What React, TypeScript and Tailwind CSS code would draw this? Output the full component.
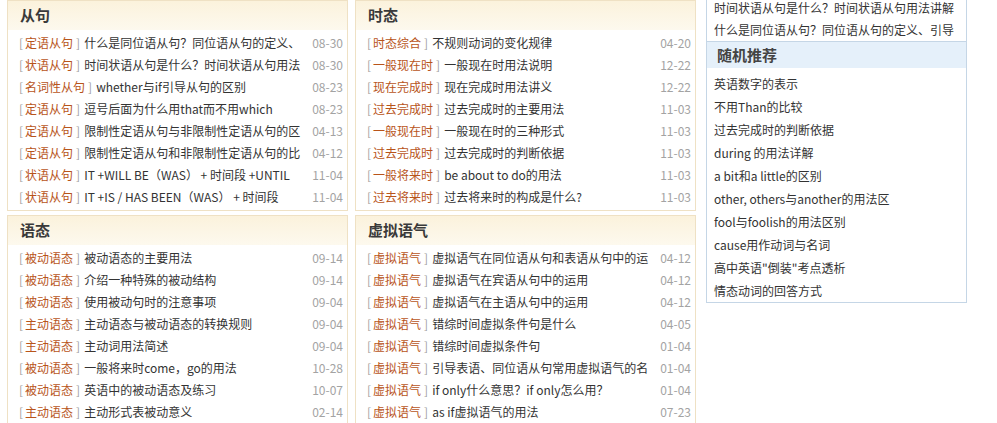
import React from 'react';

type Row = { tag: string; title: string; date: string };

const FONT = { fontFamily: '"Microsoft YaHei", "Noto Sans CJK SC", "Noto Sans", sans-serif' };

const CLAUSES: Row[] = [
  { tag: '定语从句', title: '什么是同位语从句？同位语从句的定义、', date: '08-30' },
  { tag: '状语从句', title: '时间状语从句是什么？时间状语从句用法', date: '08-30' },
  { tag: '名词性从句', title: 'whether与if引导从句的区别', date: '08-23' },
  { tag: '定语从句', title: '逗号后面为什么用that而不用which', date: '08-23' },
  { tag: '定语从句', title: '限制性定语从句与非限制性定语从句的区', date: '04-13' },
  { tag: '定语从句', title: '限制性定语从句和非限制性定语从句的比', date: '04-12' },
  { tag: '状语从句', title: 'IT +WILL BE（WAS） + 时间段 +UNTIL', date: '11-04' },
  { tag: '状语从句', title: 'IT +IS / HAS BEEN（WAS） + 时间段', date: '11-04' },
];

const TENSES: Row[] = [
  { tag: '时态综合', title: '不规则动词的变化规律', date: '04-20' },
  { tag: '一般现在时', title: '一般现在时用法说明', date: '12-22' },
  { tag: '现在完成时', title: '现在完成时用法讲义', date: '12-22' },
  { tag: '过去完成时', title: '过去完成时的主要用法', date: '11-03' },
  { tag: '一般现在时', title: '一般现在时的三种形式', date: '11-03' },
  { tag: '过去完成时', title: '过去完成时的判断依据', date: '11-03' },
  { tag: '一般将来时', title: 'be about to do的用法', date: '11-03' },
  { tag: '过去将来时', title: '过去将来时的构成是什么?', date: '11-03' },
];

const VOICE: Row[] = [
  { tag: '被动语态', title: '被动语态的主要用法', date: '09-14' },
  { tag: '被动语态', title: '介绍一种特殊的被动结构', date: '09-14' },
  { tag: '被动语态', title: '使用被动句时的注意事项', date: '09-04' },
  { tag: '主动语态', title: '主动语态与被动语态的转换规则', date: '09-04' },
  { tag: '主动语态', title: '主动词用法简述', date: '09-04' },
  { tag: '被动语态', title: '一般将来时come，go的用法', date: '10-28' },
  { tag: '被动语态', title: '英语中的被动语态及练习', date: '10-07' },
  { tag: '主动语态', title: '主动形式表被动意义', date: '02-14' },
];

const SUBJUNCTIVE: Row[] = [
  { tag: '虚拟语气', title: '虚拟语气在同位语从句和表语从句中的运', date: '04-12' },
  { tag: '虚拟语气', title: '虚拟语气在宾语从句中的运用', date: '04-12' },
  { tag: '虚拟语气', title: '虚拟语气在主语从句中的运用', date: '04-12' },
  { tag: '虚拟语气', title: '错综时间虚拟条件句是什么', date: '04-05' },
  { tag: '虚拟语气', title: '错综时间虚拟条件句', date: '01-04' },
  { tag: '虚拟语气', title: '引导表语、同位语从句常用虚拟语气的名', date: '01-04' },
  { tag: '虚拟语气', title: 'if only什么意思？if only怎么用？', date: '01-04' },
  { tag: '虚拟语气', title: 'as if虚拟语气的用法', date: '07-23' },
];

const LATEST = ['时间状语从句是什么？时间状语从句用法讲解', '什么是同位语从句？同位语从句的定义、引导'];

const RANDOM = [
  '英语数字的表示',
  '不用Than的比较',
  '过去完成时的判断依据',
  'during 的用法详解',
  'a bit和a little的区别',
  'other, others与another的用法区',
  'fool与foolish的用法区别',
  'cause用作动词与名词',
  '高中英语"倒装"考点透析',
  '情态动词的回答方式',
];

function ArticleBox({ title, rows, className = '' }: { title: string; rows: Row[]; className?: string }) {
  return (
    <div className={`border border-[#efe1c4] bg-white ${className}`}>
      <div className="h-[29px] bg-gradient-to-b from-[#fbf2dc] to-[#fdf9ee] px-3 flex items-center">
        <h3 className="text-[15px] font-bold text-[#3a3a3a]">{title}</h3>
      </div>
      <ul className="pt-[2px] pb-[2px]">
        {rows.map((r, i) => (
          <li key={i} className="h-[22px] flex items-center pl-[11px] pr-[4px] text-[12px] whitespace-nowrap">
            <span className="flex-1 overflow-hidden flex items-center">
              <span className="text-[#a0a0a0]">[</span>
              <span className="text-[#b8541a] ml-[2px]">{r.tag}</span>
              <span className="text-[#a0a0a0] ml-[3px] mr-[4px]">]</span>
              <span className="text-[#333]">{r.title}</span>
            </span>
            <span className="ml-[8px] text-[#a3a3a3]">{r.date}</span>
          </li>
        ))}
      </ul>
    </div>
  );
}

export default function App() {
  return (
    <div className="w-[997px] h-[423px] overflow-hidden bg-white flex pl-[7px]" style={FONT}>
      <div className="w-[341px] flex flex-col">
        <ArticleBox title="从句" rows={CLAUSES} />
        <ArticleBox title="语态" rows={VOICE} className="mt-[4px]" />
      </div>
      <div className="w-[341px] ml-[7px] flex flex-col">
        <ArticleBox title="时态" rows={TENSES} />
        <ArticleBox title="虚拟语气" rows={SUBJUNCTIVE} className="mt-[4px]" />
      </div>
      <div className="w-[261px] ml-[10px] flex flex-col">
        {/* tail of the box above, scrolled partly out of view */}
        <ul className="border-x border-b border-[#c5d6e6] -mt-[3px] pl-[7px]">
          {LATEST.map((t) => (
            <li key={t} className="h-[22px] leading-[22px] text-[12px] text-[#333] whitespace-nowrap overflow-hidden">
              {t}
            </li>
          ))}
        </ul>
        <div className="border-x border-b border-[#c5d6e6]">
          <div className="h-[26px] bg-[#e5f0fa] pl-[10px] flex items-center">
            <h3 className="text-[15px] font-bold text-[#444]">随机推荐</h3>
          </div>
          <ul className="pt-[4px] pl-[7px]">
            {RANDOM.map((t) => (
              <li key={t} className="h-[23px] leading-[23px] text-[12px] text-[#333] whitespace-nowrap">
                {t}
              </li>
            ))}
          </ul>
        </div>
      </div>
    </div>
  );
}
